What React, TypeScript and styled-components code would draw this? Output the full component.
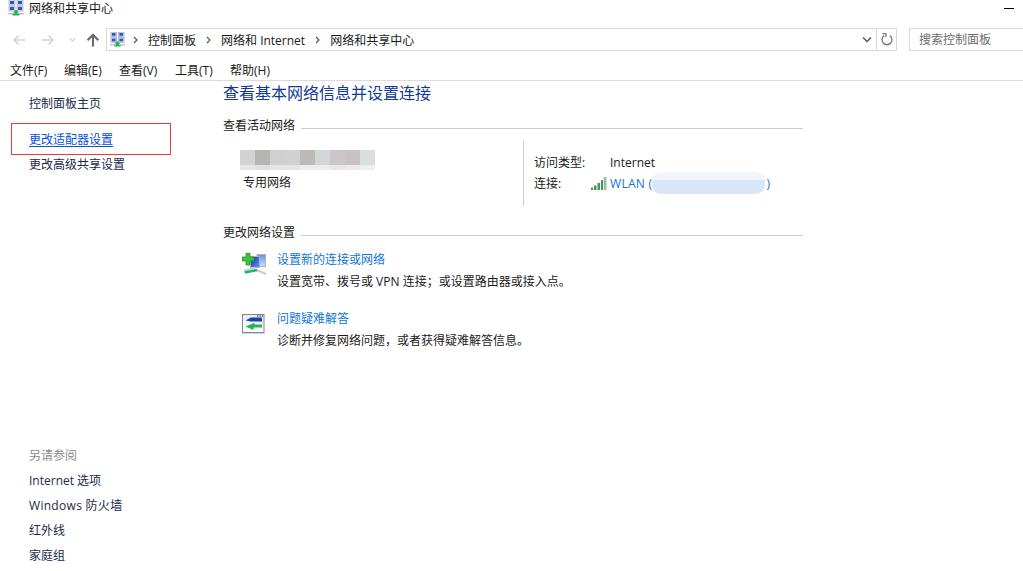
import React from "react";
import styled, { createGlobalStyle } from "styled-components";

const GlobalStyle = createGlobalStyle`
  html, body { margin: 0; padding: 0; background: #fff; }
  body {
    font-family: "Open Sans", "Noto Sans CJK SC", "Liberation Sans", sans-serif;
    font-size: 12px;
    color: #1a1a1a;
  }
`;

const Window = styled.div`
  width: 1023px;
  height: 571px;
  overflow: hidden;
  display: flex;
  flex-direction: column;
`;

const TitleBar = styled.div`
  height: 16px;
  display: flex;
  align-items: center;
  gap: 5px;
  padding: 0 9px 0 8px;
  line-height: 16px;
`;

const TitleText = styled.span`
  flex: 1;
  padding-top: 1px;
`;

const MinimizeMark = styled.span`
  width: 10px;
  height: 1px;
  background: #000;
`;

const NavBar = styled.div`
  margin-top: 12px;
  height: 23px;
  display: flex;
  align-items: center;
`;

const NavIcons = styled.div`
  width: 106px;
  flex: none;
  height: 23px;
  display: flex;
  align-items: center;
  padding-left: 12px;
  box-sizing: border-box;
`;

const NavButton = styled.span<{ $w: number }>`
  width: ${(p) => p.$w}px;
  display: flex;
  align-items: center;
  flex: none;
`;

const AddressBox = styled.div`
  width: 791px;
  height: 23px;
  box-sizing: border-box;
  border: 1px solid #d9d9d9;
  display: flex;
  align-items: center;
  flex: none;
`;

const Crumbs = styled.div`
  flex: 1;
  display: flex;
  align-items: center;
  padding-left: 3px;
  white-space: nowrap;
`;

const Crumb = styled.span`
  margin-left: 10px;
`;

const CrumbArrow = styled.svg<{ $gap: number }>`
  margin-left: ${(p) => p.$gap}px;
  width: 5px;
  height: 8px;
`;

const RefreshCell = styled.div`
  width: 19px;
  height: 21px;
  border-left: 1px solid #d9d9d9;
  display: flex;
  align-items: center;
  justify-content: center;
`;

const SearchBox = styled.div`
  margin-left: 12px;
  flex: 1;
  height: 23px;
  box-sizing: border-box;
  border: 1px solid #d9d9d9;
  border-right: 0;
  padding-left: 9px;
  line-height: 22px;
  color: #6d6d6d;
`;

const MenuBar = styled.div`
  height: 30px;
  box-sizing: border-box;
  border-bottom: 1px solid #dcdcdc;
  padding-top: 10px;
  padding-left: 10px;
  display: flex;
  line-height: 19px;
`;

const MenuItem = styled.span<{ $w: number }>`
  width: ${(p) => p.$w}px;
  flex: none;
`;

const Body = styled.div`
  flex: 1;
  display: flex;
  min-height: 0;
`;

const Sidebar = styled.nav`
  width: 223px;
  flex: none;
  display: flex;
  flex-direction: column;
  justify-content: space-between;
  padding: 13px 0 0;
  box-sizing: border-box;
`;

const SideGroup = styled.div`
  display: flex;
  flex-direction: column;
`;

const SideLink = styled.a<{ $spaced?: boolean }>`
  padding-left: 29px;
  height: 25px;
  line-height: 20px;
  color: #1a2a4a;
  letter-spacing: ${(p) => (p.$spaced ? "0.3px" : "normal")};
`;

const SideMuted = styled(SideLink)`
  color: #8a8a8a;
`;

const HighlightBox = styled.div`
  margin: 4px 0 0 11px;
  width: 160px;
  height: 32px;
  box-sizing: border-box;
  border: 1px solid #f03a3a;
  padding: 7px 0 0 17px;
  line-height: 18px;
`;

const ActiveLink = styled.a`
  color: #0a50d8;
  text-decoration: underline;
  text-underline-offset: 2px;
`;

const Main = styled.main`
  width: 580px;
  flex: none;
  display: flex;
  flex-direction: column;
`;

const Heading = styled.h1`
  margin: 0;
  font-size: 16px;
  font-weight: 400;
  line-height: 24px;
  color: #0f3a9a;
`;

const SectionHead = styled.div`
  display: flex;
  align-items: center;
  gap: 6px;
  line-height: 20px;
  margin-top: 11px;
`;

const SectionRule = styled.span`
  flex: 1;
  height: 1px;
  margin-top: 4px;
  background: #cccccc;
`;

const ActiveRow = styled.div`
  display: flex;
  height: 65px;
  margin-top: 5px;
`;

const NetworkSide = styled.div`
  width: 300px;
  flex: none;
  padding: 9px 0 0 17px;
  box-sizing: border-box;
`;

const MaskStrip = styled.div`
  display: flex;
`;

const MaskBlock = styled.span<{ $c: string; $soft: string }>`
  width: 15px;
  height: 20px;
  background: linear-gradient(${(p) => p.$c} 0 15px, ${(p) => p.$soft} 15px);
`;

const NetworkKind = styled.div`
  margin: 5px 0 0 3px;
  line-height: 16px;
`;

const DetailSide = styled.div`
  flex: 1;
  border-left: 1px solid #cfcfcf;
  padding: 12px 0 0 10px;
  display: flex;
  flex-direction: column;
  gap: 3px;
`;

const DetailRow = styled.div`
  display: flex;
  align-items: center;
  height: 18px;
`;

const DetailLabel = styled.span`
  width: 76px;
  flex: none;
`;

const ConnLabel = styled.span`
  width: 57px;
  flex: none;
`;

const WlanLink = styled.a`
  position: relative;
  margin-left: 3px;
  color: #0e76d8;
  white-space: nowrap;
  letter-spacing: 0.3px;
`;

const WlanMask = styled.span`
  position: absolute;
  left: 42px;
  top: -3px;
  width: 113px;
  height: 22px;
  border-radius: 9px;
  background: linear-gradient(#f1f6fc 0 8px, #d8e6f6 8px);
`;

const WlanParen = styled.span`
  margin-left: 114px;
`;

const ChangeHead = styled(SectionHead)`
  margin-top: 17px;
`;

const TaskRow = styled.div`
  display: flex;
  margin: 8px 0 0 19px;
  height: 51px;
`;

const TaskIcon = styled.div<{ $top: number }>`
  width: 35px;
  flex: none;
  padding-top: ${(p) => p.$top}px;
`;

const TaskText = styled.div`
  display: flex;
  flex-direction: column;
  gap: 4px;
  line-height: 18px;
`;

const TaskLink = styled.a`
  color: #0e76d8;
`;

const TaskDesc = styled.span`
  color: #1a1a1a;
`;

function NetIcon({ size }: { size: number }) {
  return (
    <svg width={size} height={size} viewBox="0 0 16 16">
      <rect x="1" y="0" width="6" height="5" fill="#e6e9ee" stroke="#8b93a5" strokeWidth=".6" />
      <rect x="2" y="1" width="4" height="3" fill="#2d55c8" />
      <rect x="9" y="0" width="6" height="5" fill="#e6e9ee" stroke="#8b93a5" strokeWidth=".6" />
      <rect x="10" y="1" width="4" height="3" fill="#2d55c8" />
      <rect x="1" y="6" width="6" height="5" fill="#e6e9ee" stroke="#8b93a5" strokeWidth=".6" />
      <rect x="2" y="7" width="4" height="3" fill="#2d55c8" />
      <rect x="9" y="6" width="6" height="5" fill="#e6e9ee" stroke="#8b93a5" strokeWidth=".6" />
      <rect x="10" y="7" width="4" height="3" fill="#2d55c8" />
      <rect x="0" y="13" width="16" height="1.4" fill="#b9bcc2" />
      <path d="M8 9.5 11 12.5H9.5V14H11.5V15.5H4.5V14H6.5V12.5H5Z" fill="#19b45a" />
    </svg>
  );
}

function BackForwardIcon({ flip }: { flip?: boolean }) {
  return (
    <svg width="14" height="14" viewBox="0 0 14 14" style={flip ? { transform: "scaleX(-1)" } : undefined}>
      <path d="M1 7H12M7.5 2.5 12 7l-4.5 4.5" fill="none" stroke="#d4d4d4" strokeWidth="1.7" />
    </svg>
  );
}

function UpIcon() {
  return (
    <svg width="14" height="14" viewBox="0 0 14 14">
      <path d="M7 13.5V2M1.6 7.2 7 1.8l5.4 5.4" fill="none" stroke="#6b6b6b" strokeWidth="2.2" />
    </svg>
  );
}

function CrumbChevron({ gap = 10 }: { gap?: number }) {
  return (
    <CrumbArrow $gap={gap} viewBox="0 0 5 8">
      <path d="M1 1l3 3-3 3" fill="none" stroke="#555" strokeWidth="1.2" />
    </CrumbArrow>
  );
}

function SignalIcon() {
  return (
    <svg width="16" height="13" viewBox="0 0 16 13" style={{ flex: "none" }}>
      <path d="M0 13V10.5H2V13ZM3 13V8.5H5.5V13ZM6.5 13V6H9V13ZM10 13V3H12V13Z" fill="#47975c" />
      <path d="M12.7 13V0H15.5V13Z" fill="#9dbda6" />
    </svg>
  );
}

function NewConnIcon() {
  return (
    <svg width="25" height="25" viewBox="0 0 25 25">
      <defs>
        <linearGradient id="screenBack" x1="0" y1="0" x2="0" y2="1">
          <stop offset="0" stopColor="#5f8fe6" />
          <stop offset="1" stopColor="#cfe0fa" />
        </linearGradient>
        <linearGradient id="screenFront" x1="0" y1="0" x2="1" y2="1">
          <stop offset="0" stopColor="#0f2fb4" />
          <stop offset="1" stopColor="#5f9be8" />
        </linearGradient>
      </defs>
      <rect x="15" y="1.5" width="8.5" height="12" fill="url(#screenBack)" stroke="#a9b2c2" />
      <rect x="8.5" y="3.5" width="9" height="11" fill="url(#screenFront)" stroke="#a9b2c2" />
      <path d="M13 16.5 24 21" stroke="#c9cdd2" strokeWidth="2.4" />
      <path d="M2 18.5 13 15.5" stroke="#d0d4d8" strokeWidth="3.4" />
      <path d="M3 19.5 15 17" stroke="#25b765" strokeWidth="2.6" />
      <path d="M4 0h4v4h4v4H8v4H4V8H0V4h4z" fill="#3cc23c" stroke="#178a2a" strokeWidth=".7" />
    </svg>
  );
}

function TroubleIcon() {
  return (
    <svg width="23" height="20" viewBox="0 0 23 20">
      <defs>
        <linearGradient id="troublePanel" x1="0" y1="0" x2="0" y2="1">
          <stop offset="0" stopColor="#e9ebee" />
          <stop offset="1" stopColor="#ffffff" />
        </linearGradient>
      </defs>
      <rect x=".5" y=".5" width="21.5" height="18" fill="url(#troublePanel)" stroke="#84888e" />
      <path d="M15 2h1.4M17.5 2h1.4M20 2h1" stroke="#3e4f7a" strokeWidth="1.4" />
      <path d="M3.5 6.5 9 3.4H20V7.5H9Z" fill="#1d3fb0" />
      <path d="M3.5 12.5 12 9 13 10.5H20V13.5H12L11 16Z" fill="#22b85f" />
      <rect x="0" y="19" width="23" height="1" fill="#d4d6d9" />
    </svg>
  );
}

const maskBlocks = [
  ["#d3d3d3", "#e6e6e6"],
  ["#b7b4b4", "#e0e0e0"],
  ["#d1d0ce", "#e6e6e4"],
  ["#d0d2d2", "#e4e6e6"],
  ["#bcbab6", "#ededec"],
  ["#d2d6d7", "#eceeee"],
  ["#c9c7c9", "#e8e7e8"],
  ["#c8c4c2", "#ecebea"],
  ["#dadedf", "#eeeff0"],
];

const menus: [string, number][] = [
  ["文件(F)", 54],
  ["编辑(E)", 55],
  ["查看(V)", 56],
  ["工具(T)", 55],
  ["帮助(H)", 50],
];

export default function App() {
  return (
    <Window>
      <GlobalStyle />
      <TitleBar>
        <NetIcon size={16} />
        <TitleText>网络和共享中心</TitleText>
        <MinimizeMark />
      </TitleBar>
      <NavBar>
        <NavIcons>
          <NavButton $w={29}>
            <BackForwardIcon flip />
          </NavButton>
          <NavButton $w={28}>
            <BackForwardIcon />
          </NavButton>
          <NavButton $w={17}>
            <svg width="7" height="5" viewBox="0 0 7 5">
              <path d="M.5 1l3 3 3-3" fill="none" stroke="#d4d4d4" strokeWidth="1.1" />
            </svg>
          </NavButton>
          <NavButton $w={16}>
            <UpIcon />
          </NavButton>
        </NavIcons>
        <AddressBox>
          <Crumbs>
            <NetIcon size={15} />
            <CrumbChevron gap={8} />
            <Crumb>控制面板</Crumb>
            <CrumbChevron />
            <Crumb>网络和 Internet</Crumb>
            <CrumbChevron />
            <Crumb>网络和共享中心</Crumb>
          </Crumbs>
          <svg width="10" height="7" viewBox="0 0 10 7" style={{ marginRight: 4 }}>
            <path d="M1 1.5l4 4 4-4" fill="none" stroke="#555" strokeWidth="1.5" />
          </svg>
          <RefreshCell>
            <svg width="12" height="13" viewBox="0 0 12 13">
              <path d="M3.2 2.6A5 5 0 1 0 8.8 2.6" fill="none" stroke="#777" strokeWidth="1.3" />
              <path d="M1.5.6h3.4v3.4" fill="none" stroke="#777" strokeWidth="1.3" />
            </svg>
          </RefreshCell>
        </AddressBox>
        <SearchBox>搜索控制面板</SearchBox>
      </NavBar>
      <MenuBar>
        {menus.map(([label, w]) => (
          <MenuItem key={label} $w={w}>
            {label}
          </MenuItem>
        ))}
      </MenuBar>
      <Body>
        <Sidebar>
          <SideGroup>
            <SideLink>控制面板主页</SideLink>
            <HighlightBox>
              <ActiveLink>更改适配器设置</ActiveLink>
            </HighlightBox>
            <SideLink>更改高级共享设置</SideLink>
          </SideGroup>
          <SideGroup>
            <SideMuted>另请参阅</SideMuted>
            <SideLink>Internet 选项</SideLink>
            <SideLink $spaced>Windows 防火墙</SideLink>
            <SideLink>红外线</SideLink>
            <SideLink>家庭组</SideLink>
          </SideGroup>
        </Sidebar>
        <Main>
          <Heading>查看基本网络信息并设置连接</Heading>
          <SectionHead>
            查看活动网络
            <SectionRule />
          </SectionHead>
          <ActiveRow>
            <NetworkSide>
              <MaskStrip>
                {maskBlocks.map(([c, soft], i) => (
                  <MaskBlock key={i} $c={c} $soft={soft} />
                ))}
              </MaskStrip>
              <NetworkKind>专用网络</NetworkKind>
            </NetworkSide>
            <DetailSide>
              <DetailRow>
                <DetailLabel>访问类型:</DetailLabel>
                Internet
              </DetailRow>
              <DetailRow>
                <ConnLabel>连接:</ConnLabel>
                <SignalIcon />
                <WlanLink>
                  WLAN (<WlanMask />
                  <WlanParen>)</WlanParen>
                </WlanLink>
              </DetailRow>
            </DetailSide>
          </ActiveRow>
          <ChangeHead>
            更改网络设置
            <SectionRule />
          </ChangeHead>
          <TaskRow>
            <TaskIcon $top={2}>
              <NewConnIcon />
            </TaskIcon>
            <TaskText>
              <TaskLink>设置新的连接或网络</TaskLink>
              <TaskDesc>设置宽带、拨号或 VPN 连接；或设置路由器或接入点。</TaskDesc>
            </TaskText>
          </TaskRow>
          <TaskRow>
            <TaskIcon $top={4}>
              <TroubleIcon />
            </TaskIcon>
            <TaskText>
              <TaskLink>问题疑难解答</TaskLink>
              <TaskDesc>诊断并修复网络问题，或者获得疑难解答信息。</TaskDesc>
            </TaskText>
          </TaskRow>
        </Main>
      </Body>
    </Window>
  );
}
